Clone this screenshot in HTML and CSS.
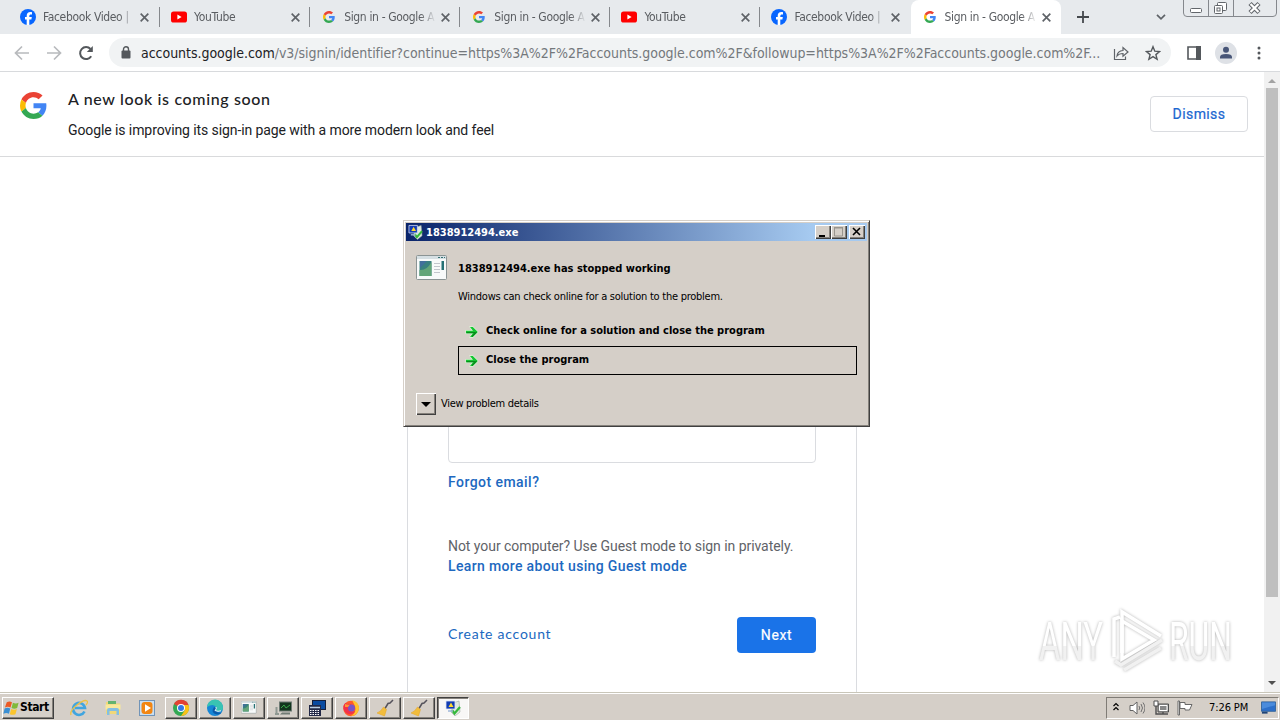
FILE: index.html
```html
<!DOCTYPE html>
<html lang="en">
  <head>
    <meta charset="UTF-8" />
    <title>Sign in - Google Accounts</title>
    <link rel="stylesheet" href="styles.css">
  </head>
  <body>
    <svg class="sprites" width="0" height="0">
      <symbol id="google" viewBox="0 0 48 48">
        <path fill="#ea4335" d="M24 9.5c3.54 0 6.71 1.22 9.21 3.6l6.85-6.85C35.9 2.38 30.47 0 24 0 14.62 0 6.51 5.38 2.56 13.22l7.98 6.19C12.43 13.72 17.74 9.5 24 9.5z"/>
        <path fill="#4285f4" d="M46.98 24.55c0-1.57-.15-3.09-.38-4.55H24v9.02h12.94c-.58 2.96-2.26 5.48-4.78 7.18l7.73 6c4.51-4.18 7.09-10.36 7.09-17.65z"/>
        <path fill="#fbbc05" d="M10.53 28.59A14.5 14.5 0 0 1 9.77 24c0-1.6.27-3.14.76-4.59l-7.98-6.19A23.9 23.9 0 0 0 0 24c0 3.88.92 7.54 2.56 10.78z"/>
        <path fill="#34a853" d="M24 48c6.48 0 11.93-2.13 15.89-5.81l-7.73-6c-2.15 1.45-4.92 2.3-8.16 2.3-6.26 0-11.57-4.22-13.47-9.91l-7.98 6.19C6.51 42.62 14.62 48 24 48z"/>
      </symbol>
      <symbol id="facebook" viewBox="0 0 16 16">
        <circle cx="8" cy="8" r="8" fill="#0866ff"/>
        <path fill="#fff" d="M6.7 16v-5.5H5V8.1h1.7V7c0-2.7 1.2-3.9 3.8-3.9.5 0 1.2.1 1.5.2v2.2h-.9c-1.3 0-1.8.5-1.8 1.7v.9h2.5l-.4 2.4H9.300V16z"/>
      </symbol>
      <symbol id="youtube" viewBox="0 0 16 16">
        <rect y="2.500" width="16" height="11" rx="2.600" fill="#f00"/>
        <path d="M6.400 5.600v4.800l4.200-2.400z" fill="#fff"/>
      </symbol>
      <symbol id="close" viewBox="0 0 8 8">
        <path d="M.6.6l6.800 6.800M7.400.6L.6 7.400" stroke="#5f6368" stroke-width="1.500"/>
      </symbol>
      <symbol id="arrow" viewBox="0 0 14 14">
        <path d="M.5 5h6L4 1.300h4L13.500 7 8 12.700H4L6.500 9h-6z" fill="#d9f7d4"/>
        <path d="M1 5.700h7L5 2h2.800l5 5-5 5H5l3-3.700H1z" fill="#14c532"/>
        <path d="M1.500 7.700h8.500M7 11.500L11.500 7" fill="none" stroke="#0a8a1c" stroke-width="1.200"/>
      </symbol>
      <symbol id="fault" viewBox="0 0 16 16">
        <path d="M8 3l6-2 1 11-5 4-4-4z" fill="#dfe9df" stroke="#9aa8a0" stroke-width=".6"/>
        <path d="M7 10l2.500 3.500L15 7" fill="none" stroke="#35b83c" stroke-width="2.200"/>
        <path d="M1 1h9v8H1z" fill="#123bb3" stroke="#dce4f5" stroke-width=".8"/>
        <path d="M6 2.500l2.500 4.500h-5z" fill="#ffd92e"/>
        <path d="M3 11h5" stroke="#9eb6d8" stroke-width="1.500"/>
      </symbol>
      <symbol id="program" viewBox="0 0 32 26">
        <rect x=".5" y=".5" width="30" height="24" rx="1" fill="#f8fafa" stroke="#8b9494"/>
        <path d="M1 2.500h29" stroke="#d5dfe3" stroke-width="3"/>
        <path d="M22 2.500h2m1 0h2m1 0h1" stroke="#347072" stroke-width="1"/>
        <rect x="3.500" y="6" width="12" height="15" fill="#398080"/>
        <path d="M3.500 15q7 1 12-8v14h-12z" fill="#63a578"/>
        <path d="M4 6h7L4 13z" fill="#416f9c"/>
        <path d="M18 8.500h6m-6 3h6m-6 3h6m-6 3h6" stroke="#c2c6cc" stroke-width="1"/>
        <rect x="25.500" y="6" width="2.500" height="9" fill="#257174"/>
      </symbol>
      <symbol id="broom" viewBox="0 0 20 18">
        <path d="M18 1l-3 3-2 .5-3 5" fill="none" stroke="#55535c" stroke-width="1.500"/>
        <path d="M8.500 8l3 2.500-2 6.500L2 14q4-1.500 6.500-6z" fill="#f2bd3d" stroke="#e8a51c" stroke-width=".5"/>
      </symbol>
    </svg>

    <div class="tabs">
      <div class="tab"><svg class="favicon"><use href="#facebook"/></svg><span class="tab-title">Facebook Video |</span><svg class="tab-close"><use href="#close"/></svg></div>
      <div class="tab"><svg class="favicon"><use href="#youtube"/></svg><span class="tab-title">YouTube</span><svg class="tab-close"><use href="#close"/></svg></div>
      <div class="tab"><svg class="favicon google-icon"><use href="#google"/></svg><span class="tab-title">Sign in - Google A</span><svg class="tab-close"><use href="#close"/></svg></div>
      <div class="tab"><svg class="favicon google-icon"><use href="#google"/></svg><span class="tab-title">Sign in - Google A</span><svg class="tab-close"><use href="#close"/></svg></div>
      <div class="tab"><svg class="favicon"><use href="#youtube"/></svg><span class="tab-title">YouTube</span><svg class="tab-close"><use href="#close"/></svg></div>
      <div class="tab before-active"><svg class="favicon"><use href="#facebook"/></svg><span class="tab-title">Facebook Video |</span><svg class="tab-close"><use href="#close"/></svg></div>
      <div class="tab active"><svg class="favicon google-icon"><use href="#google"/></svg><span class="tab-title">Sign in - Google A</span><svg class="tab-close"><use href="#close"/></svg></div>
      <svg class="new-tab" viewBox="0 0 12 12"><path d="M6 0v12M0 6h12" stroke="#45494d" stroke-width="1.800"/></svg>
      <svg class="tab-search" viewBox="0 0 10 6"><path d="M1 .8l4 4 4-4" fill="none" stroke="#5f6368" stroke-width="1.700"/></svg>
      <svg class="window-buttons" viewBox="0 0 94 17">
        <path d="M.5 0v13q0 3.500 3.500 3.500h86q3.500 0 3.500-3.500V0M25.500 0v16M50.500 0v16" fill="none" stroke="#85888d"/>
        <rect x="7.500" y="8.500" width="11" height="4" rx="1" fill="#fff" stroke="#62666b"/>
        <rect x="34.500" y="2.500" width="9" height="8" rx="1" fill="#fff" stroke="#62666b"/>
        <rect x="31.500" y="5.500" width="8" height="8" rx="1" fill="#fff" stroke="#62666b"/>
        <rect x="34" y="8" width="3" height="3" fill="#fff" stroke="#62666b"/>
        <path d="M67 3.500l9 9M76 3.500l-9 9" stroke="#62666b" stroke-width="4.400"/>
        <path d="M67.500 4l8 8M75.500 4l-8 8" stroke="#fff" stroke-width="2.300"/>
      </svg>
    </div>

    <div class="toolbar">
      <svg class="nav" viewBox="0 0 16 16"><path d="M15 8H2M8 1.500L1.500 8 8 14.500" fill="none" stroke="#b8babd" stroke-width="1.700"/></svg>
      <svg class="nav" viewBox="0 0 16 16"><path d="M1 8h13M8 1.500L14.500 8 8 14.500" fill="none" stroke="#b8babd" stroke-width="1.700"/></svg>
      <svg class="nav" viewBox="0 0 16 16"><path d="M13.200 11.300A6 6 0 1 1 12.500 4" fill="none" stroke="#54585c" stroke-width="2"/><path d="M14.800 1v6h-6z" fill="#54585c"/></svg>
      <div class="omnibox">
        <svg class="lock" viewBox="0 0 10 13"><rect x=".5" y="4.500" width="9" height="8" rx="1" fill="#54585c"/><path d="M2.500 5V3.300a2.500 2.500 0 0 1 5 0V5" fill="none" stroke="#54585c" stroke-width="1.400"/></svg>
        <span class="url"><span class="host">accounts.google.com</span>/v3/signin/identifier?continue=https%3A%2F%2Faccounts.google.com%2F&amp;followup=https%3A%2F%2Faccounts.google.com%2F...</span>
        <svg class="share" viewBox="0 0 16 16"><path d="M1.500 4v10.500h11V11.500M4 11q.5-5 6-5.500V2.500l5 4.500-5 4.300V8.500Q6 8.500 4 11z" fill="none" stroke="#5f6368" stroke-width="1.200"/></svg>
        <svg class="star" viewBox="0 0 16 16"><path d="M8 1.700l1.800 4.500 4.800.3-3.700 3.100 1.200 4.700L8 11.700l-4.100 2.600 1.200-4.700-3.700-3.100 4.800-.3z" fill="none" stroke="#54585c" stroke-width="1.400"/></svg>
      </div>
      <svg class="side-panel" viewBox="0 0 14 14"><path d="M1 1h12v12H1z" fill="#fff" stroke="#54585c" stroke-width="1.600"/><path d="M9 0h5v14H9z" fill="#54585c"/></svg>
      <svg class="avatar" viewBox="0 0 22 22"><circle cx="11" cy="11" r="11" fill="#dee1e6"/><circle cx="11" cy="7.800" r="3" fill="#485678"/><path d="M5 16.500v-1.500q0-3 6-3t6 3v1.500z" fill="#485678"/></svg>
      <svg class="menu" viewBox="0 0 4 14"><circle cx="2" cy="2" r="1.500"/><circle cx="2" cy="7" r="1.500"/><circle cx="2" cy="12" r="1.500"/></svg>
    </div>

    <div class="viewport">
      <div class="page">
        <div class="banner">
          <svg class="banner-logo"><use href="#google"/></svg>
          <div class="banner-text">
            <h1>A new look is coming soon</h1>
            <p>Google is improving its sign-in page with a more modern look and feel</p>
          </div>
          <button class="dismiss">Dismiss</button>
        </div>
        <div class="card">
          <div class="email"></div>
          <a class="link forgot">Forgot email?</a>
          <p class="guest">Not your computer? Use Guest mode to sign in privately.</p>
          <a class="link learn">Learn more about using Guest mode</a>
          <div class="actions">
            <a class="create">Create account</a>
            <button class="next">Next</button>
          </div>
        </div>
      </div>
      <div class="scrollbar">
        <svg class="scroll-arrow" viewBox="0 0 8 4"><path d="M0 4l4-4 4 4z" fill="#a3a3a3"/></svg>
        <div class="thumb"></div>
        <svg class="scroll-arrow down" viewBox="0 0 8 4"><path d="M0 0l4 4 4-4z" fill="#505050"/></svg>
      </div>
    </div>

    <div class="taskbar">
      <div class="start raised">
        <svg class="flag" viewBox="0 0 18 16">
          <path d="M4 2q3-2 5.500 0L8 7.500q-3-1.500-6 0z" fill="#ec5a24"/>
          <path d="M10.500 2.500q3 1.500 6 0L15 8q-3 1.500-6 0z" fill="#80b93a"/>
          <path d="M1.700 8.500q3-1.500 6 0L6.300 14Q3.500 12.500.4 14z" fill="#3b8fd3"/>
          <path d="M8.700 9q3 1.500 6 0l-1.500 5.500q-3 1.500-6 0z" fill="#fbc52e"/>
        </svg>
        <span>Start</span>
      </div>
      <div class="quick">
        <svg viewBox="0 0 18 18"><path d="M14.500 12.500A6 6 0 1 1 15 9H5" fill="none" stroke="#41a5df" stroke-width="2.600"/><path d="M1 16Q-.5 12 7 6T17 2q1.500 1-1 4" fill="none" stroke="#edc244" stroke-width="1.300"/></svg>
        <svg viewBox="0 0 18 18"><path d="M2 3h6l1 1.500h7V15H2z" fill="#f1d879"/><path d="M4 2h8v3H4z" fill="#64b36f"/><path d="M1.500 5.500h15v5h-15z" fill="#f9e99d"/><path d="M3 16v-5q0-2 2-2h8q2 0 2 2v5h-2.500v-4h-7v4z" fill="#84bfe2"/></svg>
        <svg viewBox="0 0 18 18"><rect x="1.500" y="1.500" width="15" height="15" fill="#c9dff2" stroke="#7194b8"/><rect x="3.500" y="3" width="11" height="12" rx="3" fill="#f28613"/><path d="M7 5.200v7.600L13 9z" fill="#fff"/></svg>
      </div>
      <div class="tasks">
        <div class="task raised"><svg viewBox="0 0 18 18"><circle cx="9" cy="9" r="8" fill="#34a853"/><path d="M9 9L2 5a8 8 0 0 1 14.500 1z" fill="#e34133"/><path d="M9 6h7.500A8 8 0 0 1 9 17l4-6z" fill="#fbc116"/><circle cx="9" cy="9" r="4" fill="#fff"/><circle cx="9" cy="9" r="3" fill="#3578e5"/></svg></div>
        <div class="task raised"><svg viewBox="0 0 18 18"><circle cx="9" cy="9" r="8" fill="#1686d5"/><path d="M1 8a8 8 0 0 1 16 1q0 3-4 3H9q2-1.500 1-4-3-4-9 0z" fill="#39c3b2"/><path d="M8 8q-4 6 3 7.500 3 0 5-2-6 1-6-3 1-1 0-2z" fill="#0b5aa9"/><path d="M10 8q1 2-1 3.500 3 1.500 6 .3" fill="none" stroke="#eef7fa" stroke-width="1"/></svg></div>
        <div class="task raised"><svg class="small"><use href="#program"/></svg></div>
        <div class="task raised"><svg viewBox="0 0 18 18"><path d="M2.500 8v7M1 15h4" stroke="#8f9891" stroke-width="2"/><rect x="5.500" y="3" width="12" height="9" fill="#11351d" stroke="#6d7973"/><path d="M7 9l3-3 2 3 4-3" fill="none" stroke="#37a647"/><path d="M8 13.500h8v2H6z" fill="#717b74"/></svg></div>
        <div class="task raised"><svg viewBox="0 0 18 18"><rect x="4.500" y="1.500" width="13" height="9" fill="#094aa0" stroke="#161e39"/><path d="M1 6h12v11H1z" fill="#222846"/><path d="M2 8.500h10" stroke="#bbd0e6" stroke-width="1.500"/><path d="M2 11.500h10M2 13.500h10M2 15.500h10" stroke="#fff" stroke-dasharray="1.500 1"/></svg></div>
        <div class="task raised"><svg viewBox="0 0 18 18"><circle cx="9" cy="9.500" r="7.800" fill="#ff5b2b"/><path d="M10 1q7 2 7 8a8 8 0 0 1-8 8q6-3 4-10z" fill="#ffc52f"/><path d="M1.500 7Q3 2 5 5q4-1 5 2-3 0-4 2 2 5 7 3-2 4-7 3-5-2-4.500-8z" fill="#f1314b"/><circle cx="9.500" cy="9" r="3.500" fill="#7855c9"/><path d="M3 5q3 1 5 .5L6 8H3z" fill="#ff9730"/></svg></div>
        <div class="task raised"><svg class="wide"><use href="#broom"/></svg></div>
        <div class="task raised"><svg class="wide"><use href="#broom"/></svg></div>
        <div class="task pressed"><svg viewBox="0 0 16 16"><use href="#fault"/></svg></div>
      </div>
      <div class="tray">
        <svg class="chevrons" viewBox="0 0 6 9"><path d="M.5 4L3 1.500 5.500 4M.5 8L3 5.500 5.500 8" fill="none" stroke="#000" stroke-width="1.200"/></svg>
        <svg class="volume" viewBox="0 0 16 16"><path d="M1 5.500h3L8 2v12l-4-3.500H1z" fill="#fff" stroke="#626262"/><path d="M10 6q1.500 2 0 4M12 4q3 4 0 8M14 2.500q4 5.500 0 11" fill="none" stroke="#707070"/></svg>
        <svg class="network" viewBox="0 0 16 16"><path d="M5 4h10.500v8H5z" fill="#a9a9a7" stroke="#4e4e4e"/><path d="M6.500 5.500H14v5H6.500z" fill="#888" stroke="#fff"/><path d="M1 1h4v5H1z" fill="#fff" stroke="#4e4e4e"/><path d="M3 6v8h12M10 12v2" fill="none" stroke="#4e4e4e" stroke-width="1.400"/></svg>
        <svg class="action" viewBox="0 0 16 16"><path d="M1 1h1.500v14H1z" fill="#fff" stroke="#686868"/><path d="M3 2.500h5v2h7L12.500 10H8V8.500H3z" fill="#fff" stroke="#686868"/></svg>
        <span class="clock">7:26 PM</span>
        <svg class="desktop" viewBox="0 0 16 14"><path d="M.5.5h15v10H.5z" fill="#2c6fca" stroke="#356499"/><path d="M1 1h14v3L1 8z" fill="#4a8bdc"/><path d="M1 12h6" stroke="#204477" stroke-width="2"/></svg>
      </div>
    </div>

    <div class="dialog">
      <div class="dialog-title">
        <svg class="dialog-icon"><use href="#fault"/></svg>
        <span>1838912494.exe</span>
        <div class="dialog-buttons">
          <svg viewBox="0 0 16 14"><path d="M4 10h6v2H4z"/></svg>
          <svg viewBox="0 0 16 14"><path d="M3.500 3h8v8h-8z" fill="none" stroke="#99958e"/><path d="M3 2.500h9" stroke="#99958e"/></svg>
          <svg class="x" viewBox="0 0 16 14"><path d="M4 3l7 7M11 3l-7 7" stroke="#000" stroke-width="1.600"/></svg>
        </div>
      </div>
      <div class="dialog-body">
        <svg class="program-icon"><use href="#program"/></svg>
        <div class="dialog-main">
          <h2>1838912494.exe has stopped working</h2>
          <p>Windows can check online for a solution to the problem.</p>
          <div class="choice"><svg><use href="#arrow"/></svg><span>Check online for a solution and close the program</span></div>
          <div class="choice selected"><svg><use href="#arrow"/></svg><span>Close the program</span></div>
        </div>
      </div>
      <div class="details">
        <div class="details-button"><svg viewBox="0 0 10 5"><path d="M0 0h10L5 5z"/></svg></div>
        <span>View problem details</span>
      </div>
    </div>

    <svg class="watermark" viewBox="0 0 200 70">
      <defs>
        <linearGradient id="fade" x1="0" y1="0" x2="0" y2="1">
          <stop offset=".56" stop-color="#fff"/>
          <stop offset=".57" stop-color="#f1f1f1"/>
        </linearGradient>
      </defs>
      <text x="3" y="54" textLength="64" lengthAdjust="spacingAndGlyphs">ANY</text>
      <path class="play" d="M78 51V13l6-2M86 47V6l39 24"/>
      <path class="play" d="M86 15l32 19-32 19z"/>
      <path class="play lower" d="M79 55l6 4 41-25M88 64l37-22"/>
      <text x="133" y="54" textLength="63" lengthAdjust="spacingAndGlyphs">RUN</text>
    </svg>
  </body>
</html>
```
FILE: styles.css
```css
* {
  margin: 0;
  padding: 0;
  box-sizing: border-box;
}

body {
  width: 1280px;
  height: 720px;
  display: flex;
  flex-direction: column;
  overflow: hidden;
  background: #fff;
  font-family: "DejaVu Sans Condensed", "DejaVu Sans", sans-serif;
  font-size: 11px;
}

svg {
  display: block;
  flex: none;
}

.sprites {
  position: absolute;
}

/* browser tabs */
.tabs {
  height: 34px;
  display: flex;
  align-items: center;
  padding-left: 10px;
  background: #e7eaed;
}

.tab {
  width: 150.1px;
  height: 34px;
  display: flex;
  align-items: center;
  padding: 0 10px 0 11px;
  position: relative;
  flex: none;
}

.tab:first-child {
  padding-left: 10px;
}

.tab::after {
  content: "";
  position: absolute;
  right: 0;
  top: 7px;
  width: 1px;
  height: 20px;
  background: #85888c;
}

.before-active::after,
.active::after {
  display: none;
}

.active {
  background: #fff;
  border-radius: 8px 8px 0 0;
}

.favicon {
  width: 16px;
  height: 16px;
}

.google-icon {
  padding: 2px;
}

.tab-title {
  width: 92px;
  margin-left: 7px;
  white-space: nowrap;
  font-size: 12px;
  letter-spacing: -0.35px;
  color: #5a5d61;
  -webkit-mask-image: linear-gradient(90deg, #000 76px, transparent 92px);
}

.tab-close {
  width: 9px;
  height: 9px;
  margin-left: 5px;
}

.new-tab {
  width: 12px;
  height: 12px;
  margin-left: 16px;
}

.tab-search {
  width: 10px;
  height: 6px;
  margin-left: 67px;
}

.window-buttons {
  width: 94px;
  height: 17px;
  margin-left: 17px;
  align-self: flex-start;
}

/* address bar */
.toolbar {
  height: 38px;
  display: flex;
  align-items: center;
  padding: 0 20px 0 14px;
  border-bottom: 1px solid #d8dadd;
}

.nav {
  width: 16px;
  height: 16px;
  margin-right: 16px;
}

.omnibox {
  width: 1062px;
  height: 29px;
  margin-left: -1px;
  padding: 0 10px 0 12px;
  display: flex;
  align-items: center;
  border-radius: 15px;
  background: #f1f3f4;
}

.lock {
  width: 10px;
  height: 13px;
}

.url {
  width: 967px;
  margin-left: 10px;
  white-space: nowrap;
  font-size: 14px;
  letter-spacing: -0.03px;
  color: #74787c;
}

.host {
  color: #202124;
}

.share,
.star {
  width: 16px;
  height: 16px;
}

.share {
  margin-left: 6px;
}

.star {
  margin-left: 16px;
}

.side-panel {
  width: 14px;
  height: 14px;
  margin-left: 16px;
}

.avatar {
  width: 22px;
  height: 22px;
  margin-left: 14px;
}

.menu {
  width: 4px;
  height: 14px;
  margin-left: 20px;
  fill: #54585c;
}

/* sign-in page */
.viewport {
  height: 620px;
  display: flex;
  overflow: hidden;
  font-family: Roboto, sans-serif;
}

.page {
  width: 1264px;
}

.banner {
  height: 85px;
  display: flex;
  padding: 20px 16px 0 20px;
  border-bottom: 1px solid #d9dadc;
}

.banner-logo {
  width: 27px;
  height: 27px;
}

.banner-text {
  flex: 1;
  margin-left: 21px;
  color: #202124;
}

.banner-text h1 {
  margin-top: -1px;
  font-family: Lato, sans-serif;
  font-size: 16px;
  font-weight: 500;
  line-height: 16px;
  letter-spacing: 0.65px;
}

.banner-text p {
  margin-top: 13px;
  font-size: 14px;
  line-height: 20px;
  letter-spacing: -0.09px;
}

.dismiss {
  width: 98px;
  height: 36px;
  margin-top: 4px;
  padding-bottom: 1px;
  border: 1px solid #dadce0;
  border-radius: 4px;
  background: #fff;
  color: #1a66d0;
  font: 400 14px Roboto, sans-serif;
  letter-spacing: 0.4px;
  -webkit-text-stroke: 0.2px;
}

.card {
  width: 450px;
  height: 500px;
  margin: 83px auto 0;
  padding: 168px 40px 0;
  border: 1px solid #dadce0;
  border-radius: 8px;
  font-size: 14px;
  line-height: 20px;
}

.email {
  width: 368px;
  height: 54px;
  border: 1px solid #dadce0;
  border-radius: 4px;
}

.link {
  display: block;
  color: #2068c0;
  font-weight: 500;
  letter-spacing: 0.35px;
}

.forgot {
  margin-top: 9px;
  letter-spacing: 0.45px;
}

.guest {
  margin-top: 44px;
  color: #5f6368;
  letter-spacing: -0.05px;
}

.actions {
  width: 368px;
  display: flex;
  align-items: center;
  justify-content: space-between;
  margin-top: 41px;
}

.create {
  padding-bottom: 2px;
  color: #2068c0;
  font-family: Lato, sans-serif;
  letter-spacing: 0.75px;
}

.next {
  width: 79px;
  height: 36px;
  padding-bottom: 1px;
  border: none;
  border-radius: 4px;
  background: #1a73e8;
  color: #fff;
  font: 400 14px Roboto, sans-serif;
  letter-spacing: 0.6px;
  -webkit-text-stroke: 0.2px;
}

.scrollbar {
  width: 16px;
  display: flex;
  flex-direction: column;
  align-items: center;
  padding: 7px 0 7px;
  background: #f1f1f1;
}

.scroll-arrow {
  width: 8px;
  height: 4px;
}

.thumb {
  width: 12px;
  height: 509px;
  margin-top: 5px;
  background: #bfbfbf;
}

.down {
  margin-top: auto;
}

/* taskbar */
.taskbar {
  height: 28px;
  display: flex;
  align-items: center;
  padding: 2px 1px 0 2px;
  border-top: 1px solid #c9c6b9;
  background: #d5cfc8;
  box-shadow: inset 0 1px #fff;
}

.raised {
  border: 1px solid;
  border-color: #fff #404040 #404040 #fff;
  box-shadow: inset -1px -1px #85817b;
}

.start {
  width: 52px;
  height: 22px;
  display: flex;
  align-items: center;
  font-size: 12px;
  font-weight: bold;
  letter-spacing: -0.4px;
}

.start span {
  padding-bottom: 2px;
}

.flag {
  width: 17px;
  height: 16px;
}

.quick {
  display: flex;
  gap: 16px;
  margin-left: 16px;
}

.quick svg {
  width: 18px;
  height: 18px;
}

.tasks {
  display: flex;
  gap: 2px;
  margin-left: 9px;
}

.task {
  width: 32px;
  height: 22px;
  display: flex;
  align-items: center;
  justify-content: center;
}

.task svg {
  width: 18px;
  height: 18px;
}

.task .wide {
  width: 20px;
}

.task .small {
  width: 16px;
  height: 13px;
}

.pressed {
  border: 1px solid;
  border-color: #404040 #fff #fff #404040;
  background: #f8f7f6;
  box-shadow: inset 1px 1px #85817b;
}

.pressed svg {
  width: 16px;
  height: 16px;
}

.tray {
  width: 173px;
  height: 22px;
  display: flex;
  align-items: center;
  margin-left: auto;
  padding-left: 6px;
  border: 1px solid;
  border-color: #807c76 #fff #fff #807c76;
}

.chevrons {
  width: 6px;
  height: 9px;
  margin-bottom: 3px;
}

.volume,
.network,
.action {
  width: 16px;
  height: 16px;
}

.volume {
  margin-left: 10px;
}

.network {
  margin-left: 8px;
}

.action {
  margin-left: 8px;
}

.clock {
  width: 40px;
  margin-left: 16px;
  white-space: nowrap;
  letter-spacing: -0.1px;
}

.desktop {
  width: 15px;
  height: 14px;
  margin-left: 12px;
}

/* error dialog, floats over the browser */
.dialog {
  position: absolute;
  left: 403px;
  top: 220px;
  width: 467px;
  height: 207px;
  padding: 2px;
  border: 1px solid;
  border-color: #d5cfc8 #404040 #404040 #d5cfc8;
  background: #d5cfc8;
  box-shadow: inset 1px 1px #fff, inset -1px -1px #85817b;
}

.dialog-title {
  height: 18px;
  display: flex;
  align-items: center;
  padding: 0 2px;
  background: linear-gradient(90deg, #0a246a, #a6caf0 88%);
  color: #fff;
  font-weight: bold;
}

.dialog-icon {
  width: 15px;
  height: 16px;
  margin-right: 3px;
}

.dialog-buttons {
  display: flex;
  margin-left: auto;
}

.dialog-buttons svg {
  width: 16px;
  height: 14px;
  background: #d5cfc8;
  box-shadow: inset 1px 1px #fff, inset -1px -1px #404040, inset -2px -2px #85817b;
}

.dialog-buttons .x {
  margin-left: 2px;
}

.dialog-body {
  display: flex;
  padding: 14px 10px 0;
}

.program-icon {
  width: 32px;
  height: 26px;
}

.dialog-main {
  flex: 1;
  margin-left: 10px;
}

.dialog h2 {
  margin-top: 6px;
  font-size: 11px;
  line-height: 16px;
}

.dialog p {
  margin: 12px 0;
  line-height: 16px;
  letter-spacing: -0.25px;
}

.choice {
  height: 29px;
  display: flex;
  align-items: center;
  padding-left: 6px;
  border: 1px solid transparent;
  font-weight: bold;
}

.choice svg {
  width: 14px;
  height: 14px;
  margin-right: 7px;
}

.choice span {
  padding-bottom: 3px;
}

.selected {
  border-color: #000;
}

.details {
  display: flex;
  align-items: center;
  margin: 18px 0 0 10px;
  letter-spacing: -0.3px;
}

.details span {
  padding-bottom: 2px;
}

.details-button {
  width: 20px;
  height: 22px;
  display: flex;
  align-items: center;
  justify-content: center;
  margin-right: 5px;
  box-shadow: inset 1px 1px #fff, inset -1px -1px #404040, inset -2px -2px #85817b;
}

.details-button svg {
  width: 10px;
  height: 5px;
}

.watermark {
  position: absolute;
  left: 1036px;
  top: 606px;
  width: 200px;
  height: 70px;
  filter: drop-shadow(0 0 1.500px rgba(0, 0, 0, 0.3));
}

.watermark text {
  font: 400 53px Roboto, sans-serif;
  fill: url(#fade);
}

.play {
  fill: none;
  stroke: #fff;
  stroke-width: 3.500;
}

.lower {
  stroke: #f1f1f1;
}
```
